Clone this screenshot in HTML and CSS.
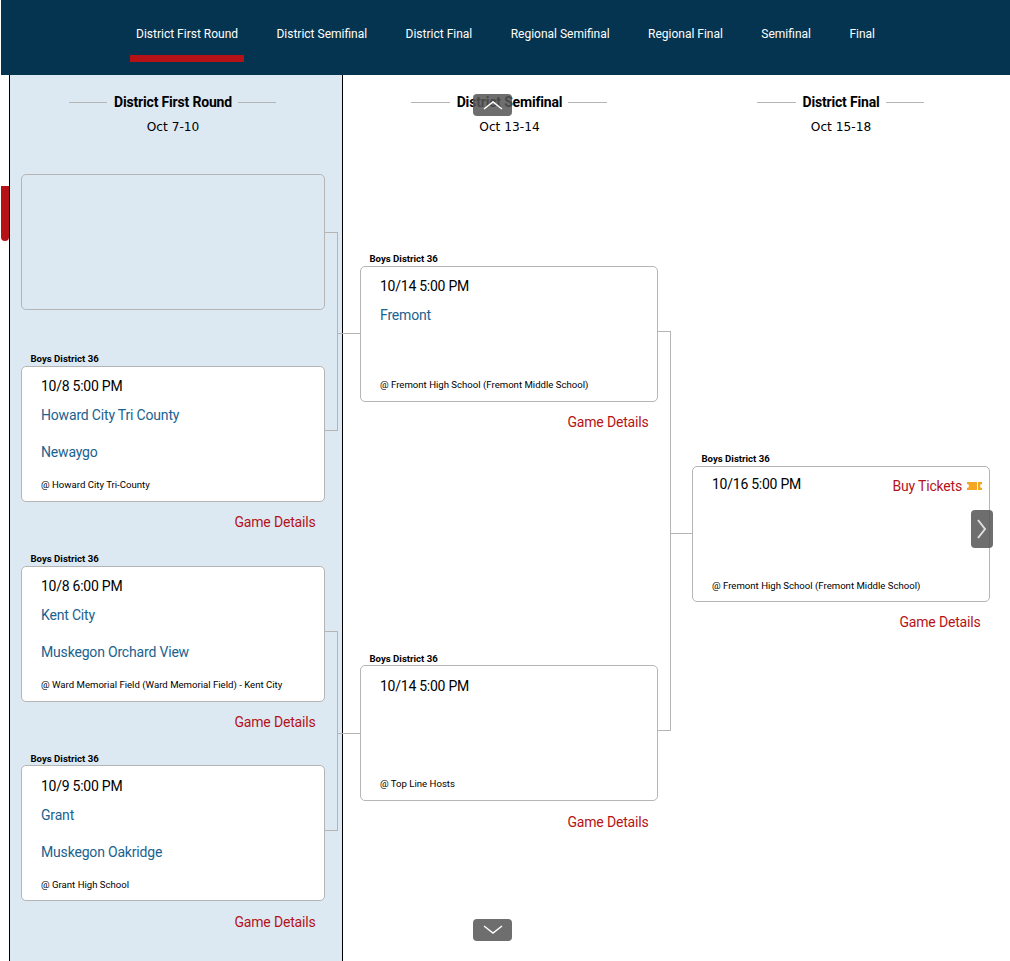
FILE: index.html
```html
<!DOCTYPE html>
<html lang="en">
<head>
<meta charset="utf-8">
<title>District Bracket</title>
<link rel="stylesheet" href="styles.css">
</head>
<body>
<nav class="rounds">
  <a class="round active">District First Round</a>
  <a class="round">District Semifinal</a>
  <a class="round">District Final</a>
  <a class="round">Regional Semifinal</a>
  <a class="round">Regional Final</a>
  <a class="round">Semifinal</a>
  <a class="round">Final</a>
</nav>
<main class="bracket">
  <section class="col col-first">
    <header class="col-head">
      <h2 class="col-title"><span>District First Round</span></h2>
      <p class="col-date">Oct 7-10</p>
    </header>
    <div class="games games-first">
      <div class="game game-empty"><div class="card"></div></div>
      <div class="game">
        <div class="league">Boys District 36</div>
        <div class="card">
          <div class="time">10/8 5:00 PM</div>
          <div class="team">Howard City Tri County</div>
          <div class="team">Newaygo</div>
          <div class="venue">@ Howard City Tri-County</div>
        </div>
        <a class="details">Game Details</a>
      </div>
      <div class="game">
        <div class="league">Boys District 36</div>
        <div class="card">
          <div class="time">10/8 6:00 PM</div>
          <div class="team">Kent City</div>
          <div class="team">Muskegon Orchard View</div>
          <div class="venue">@ Ward Memorial Field (Ward Memorial Field) - Kent City</div>
        </div>
        <a class="details">Game Details</a>
      </div>
      <div class="game game-snap">
        <div class="league">Boys District 36</div>
        <div class="card">
          <div class="time">10/9 5:00 PM</div>
          <div class="team">Grant</div>
          <div class="team">Muskegon Oakridge</div>
          <div class="venue venue-low">@ Grant High School</div>
        </div>
        <a class="details">Game Details</a>
      </div>
    </div>
  </section>
  <section class="col col-second">
    <header class="col-head">
      <h2 class="col-title"><span>District Semifinal</span></h2>
      <p class="col-date">Oct 13-14</p>
    </header>
    <div class="games games-second">
      <div class="game">
        <div class="league">Boys District 36</div>
        <div class="card">
          <div class="time">10/14 5:00 PM</div>
          <div class="team">Fremont</div>
          <div class="team"></div>
          <div class="venue">@ Fremont High School (Fremont Middle School)</div>
        </div>
        <a class="details">Game Details</a>
      </div>
      <div class="game game-snap">
        <div class="league">Boys District 36</div>
        <div class="card">
          <div class="time">10/14 5:00 PM</div>
          <div class="team"></div>
          <div class="team"></div>
          <div class="venue">@ Top Line Hosts</div>
        </div>
        <a class="details">Game Details</a>
      </div>
    </div>
  </section>
  <section class="col col-third">
    <header class="col-head">
      <h2 class="col-title"><span>District Final</span></h2>
      <p class="col-date">Oct 15-18</p>
    </header>
    <div class="games games-third">
      <div class="game">
        <div class="league">Boys District 36</div>
        <div class="card">
          <div class="time-row">
            <div class="time">10/16 5:00 PM</div>
            <a class="tickets">Buy Tickets
              <svg class="ticket-icon" width="15" height="8" viewBox="0 0 15 8"><path fill="#f5a623" d="M0 0h10v8H0v-2a2 2 0 0 0 0-4zM11 0h4v2a2 2 0 0 0 0 4v2h-4z"/></svg>
            </a>
          </div>
          <div class="team"></div>
          <div class="team"></div>
          <div class="venue venue-low">@ Fremont High School (Fremont Middle School)</div>
        </div>
        <a class="details">Game Details</a>
      </div>
    </div>
  </section>
  <svg class="lines" width="1010" height="886" viewBox="0 75 1010 886" shape-rendering="crispEdges">
    <path fill="none" stroke="#b5b5b5" d="M325 232.5H337.5V430.5H325M337.5 333.5H360M325 631.5H337.5V830.5H325M337.5 733.5H360M658 331.5H670.5V730.5H658M670.5 533.5H692"/>
  </svg>
  <div class="tab-marker"></div>
  <button class="scroll scroll-up"><svg width="20" height="10" viewBox="0 0 20 10"><path fill="none" stroke="#fff" stroke-width="1.5" d="M1 9L10 2L19 9"/></svg></button>
  <button class="scroll scroll-down"><svg width="20" height="10" viewBox="0 0 20 10"><path fill="none" stroke="#fff" stroke-width="1.5" d="M1 1L10 8L19 1"/></svg></button>
  <button class="scroll scroll-next"><svg width="10" height="20" viewBox="0 0 10 20"><path fill="none" stroke="#ddd" stroke-width="2" d="M1 1L8 10L1 19"/></svg></button>
</main>
</body>
</html>
```
FILE: styles.css
```css
* { box-sizing: border-box; }
html, body { margin: 0; padding: 0; }
body {
  height: 961px;
  overflow: hidden;
  background: #fff;
  font-family: Roboto, "Liberation Sans", sans-serif;
  color: #000;
}
.rounds {
  display: flex;
  height: 75px;
  margin-left: 1px;
  padding-left: 129px;
  background: #04344f;
}
.round {
  height: 62px;
  padding: 26px 6px 0;
  margin-right: 26.4px;
  font-size: 12px;
  line-height: 16px;
  color: #fff;
  white-space: nowrap;
}
.round.active { border-bottom: 7px solid #b51218; }
.bracket {
  position: relative;
  display: flex;
  height: 886px;
}
.col { flex: none; height: 886px; }
.col-first {
  width: 334px;
  margin-left: 9px;
  background: #dce9f3;
  border-left: 1px solid #000;
  border-right: 1px solid #000;
}
.col-second { width: 333px; }
.col-third { width: 334px; }
.col-head { padding-top: 18px; text-align: center; }
.col-first .col-head { padding-right: 6px; }
.col-third .col-head { padding-right: 4px; }
.col-title {
  margin: 0;
  font-size: 14px;
  letter-spacing: -0.18px;
  font-weight: 700;
  line-height: 18px;
}
.col-title span { position: relative; }
.col-title span::before,
.col-title span::after {
  content: "";
  position: absolute;
  top: 8px;
  width: 38.5px;
  height: 1px;
  background: #b5b5b5;
}
.col-title span::before { right: calc(100% + 7px); }
.col-title span::after { left: calc(100% + 6px); }
.col-date {
  margin: 9px 0 0;
  font-family: "DejaVu Sans", sans-serif;
  font-size: 12.2px;
  line-height: 14px;
}
.games { display: flex; flex-direction: column; }
.games-first { padding: 40px 17px 0 11px; }
.games-second { padding: 118px 18px 0 17px; }
.games-second .game:first-child { height: 400px; }
.games-third { padding: 318px 20px 0 16px; }
.game { position: relative; height: 200px; }
.game-empty { height: 178px; }
.game-empty .card { height: 136px; background: transparent; }
.league {
  height: 14px;
  padding: 1px 0 0 9.5px;
  font-size: 9.6px;
  font-weight: 700;
  line-height: 12px;
}
.card {
  position: relative;
  height: 136px;
  padding: 10px 19px 0;
  background: #fff;
  border: 1px solid #b5b5b5;
  border-radius: 5px;
}
.game-snap .card { margin-top: -1px; padding-top: 11px; }
.game-snap .details { margin-top: 12px; }
.time {
  margin-bottom: 1px;
  font-size: 14px;
  letter-spacing: -0.25px;
  line-height: 18px;
  color: #000;
}
.team {
  height: 37px;
  padding-top: 10px;
  font-size: 14px;
  letter-spacing: -0.18px;
  line-height: 18px;
  color: #1a628f;
}
.venue {
  position: absolute;
  left: 19px;
  bottom: 10px;
  font-size: 9.6px;
  line-height: 12px;
  white-space: nowrap;
}
.venue-low { bottom: 9px; }
.time-row { display: flex; justify-content: space-between; margin-top: -2px; }
.tickets {
  margin: 2px -12px 0 0;
  display: flex;
  align-items: center;
  gap: 5px;
  font-size: 14px;
  letter-spacing: -0.18px;
  line-height: 18px;
  color: #b51218;
  white-space: nowrap;
}
.ticket-icon { flex: none; }
.details {
  display: block;
  margin-top: 11px;
  padding-right: 9.5px;
  font-size: 14px;
  letter-spacing: -0.18px;
  line-height: 18px;
  text-align: right;
  color: #b51218;
}
.lines {
  position: absolute;
  left: 0;
  top: 0;
  pointer-events: none;
}
.tab-marker {
  position: absolute;
  left: 1px;
  top: 111px;
  width: 8px;
  height: 55px;
  background: #b51218;
  border-radius: 0 0 4px 4px;
}
.scroll {
  position: absolute;
  display: flex;
  align-items: center;
  justify-content: center;
  padding: 0;
  border: 0;
  border-radius: 4px;
  background: rgba(85, 85, 85, .85);
}
.scroll-up { left: 473px; top: 19px; width: 39px; height: 22px; }
.scroll-down { left: 473px; top: 844px; width: 39px; height: 22px; }
.scroll-next { left: 971px; top: 435px; width: 22px; height: 38px; }
```
